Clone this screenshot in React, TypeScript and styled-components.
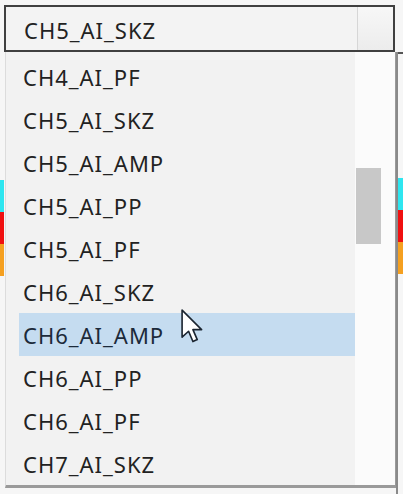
import styled, { createGlobalStyle } from "styled-components";

const items = [
  "CH4_AI_PF",
  "CH5_AI_SKZ",
  "CH5_AI_AMP",
  "CH5_AI_PP",
  "CH5_AI_PF",
  "CH6_AI_SKZ",
  "CH6_AI_AMP",
  "CH6_AI_PP",
  "CH6_AI_PF",
  "CH7_AI_SKZ",
];

const bands = ["#2ee6f0", "#f01010", "#f5a020"];

const Global = createGlobalStyle`
  html, body {
    margin: 0;
    padding: 0;
    background: #f6f6f6;
    width: 403px;
    height: 494px;
    overflow: hidden;
  }
`;

const App = () => {
  return (
    <>
      <Global />
      <S.Frame>
        <S.Edge>
          {bands.map((c) => (
            <S.Band key={c} $color={c} />
          ))}
        </S.Edge>
        <S.Main>
          <S.Combo>
            <S.ComboText>CH5_AI_SKZ</S.ComboText>
            <S.ComboButton />
          </S.Combo>
          <S.List>
            <S.Items>
              {items.map((name) => (
                <S.Item key={name} $active={name === "CH6_AI_AMP"}>
                  {name}
                </S.Item>
              ))}
            </S.Items>
            <S.Track>
              <S.Thumb />
            </S.Track>
          </S.List>
        </S.Main>
        <S.RightEdge>
          {bands.map((c) => (
            <S.Band key={c} $color={c} />
          ))}
        </S.RightEdge>
        <S.Cursor width="26" height="38" viewBox="0 0 24 35">
          <path
            d="M1 1 L1 26 L7 20.5 L11 30 L15 28.2 L11 19 L19 19 Z"
            fill="#fff"
            stroke="#1a2430"
            strokeWidth="1.5"
            strokeLinejoin="round"
          />
        </S.Cursor>
      </S.Frame>
    </>
  );
};

const S = {
  Frame: styled.div`
    position: relative;
    display: flex;
    width: 403px;
    height: 494px;
    font-family: "Noto Sans", "Open Sans", sans-serif;
  `,

  Edge: styled.div`
    width: 4px;
    padding-top: 180px;
    display: flex;
    flex-direction: column;
  `,

  RightEdge: styled.div`
    width: 5px;
    display: flex;
    flex-direction: column;
    border-left: 2px solid #8a8a8a;
    margin-left: -1px;
    margin-top: 52px;
    padding-top: 126px;
    box-shadow: inset 0 2px 0 #555;
  `,

  Band: styled.div<{ $color: string }>`
    height: 32px;
    background: ${(p) => p.$color};
  `,

  Main: styled.div`
    flex: 1;
    display: flex;
    flex-direction: column;
    padding-top: 5px;
  `,

  Combo: styled.div`
    display: flex;
    height: 43px;
    border: 2px solid #404040;
    background: #f3f3f3;
    margin-right: 2px;
  `,

  ComboText: styled.div`
    flex: 1;
    display: flex;
    align-items: center;
    padding: 2px 0 0 18px;
    font-size: 22px;
    letter-spacing: 1px;
    color: #222;
  `,

  ComboButton: styled.div`
    width: 35px;
    border-left: 1px solid #d6d6d6;
    background: linear-gradient(#f7f7f7, #ececec);
  `,

  List: styled.div`
    display: flex;
    height: 433px;
    margin-left: 1px;
    border-left: 1px solid #dcdcdc;
    border-right: 2px solid #9a9a9a;
    border-bottom: 3px solid #9a9a9a;
    background: #f2f2f2;
  `,

  Items: styled.div`
    flex: 1;
    display: flex;
    flex-direction: column;
    padding: 4px 0 0 13px;
  `,

  Item: styled.div<{ $active: boolean }>`
    height: 43px;
    display: flex;
    align-items: center;
    padding-left: 4px;
    font-size: 22px;
    letter-spacing: 1px;
    color: ${(p) => (p.$active ? "#1c2a3a" : "#222")};
    background: ${(p) => (p.$active ? "#c5dcf0" : "transparent")};
  `,

  Track: styled.div`
    width: 39px;
    padding: 116px 0 0 1px;
    background: #fbfbfb;
  `,

  Thumb: styled.div`
    width: 25px;
    height: 76px;
    background: #c8c8c8;
  `,

  Cursor: styled.svg`
    position: absolute;
    left: 181px;
    top: 309px;
  `,
};

export default App;
